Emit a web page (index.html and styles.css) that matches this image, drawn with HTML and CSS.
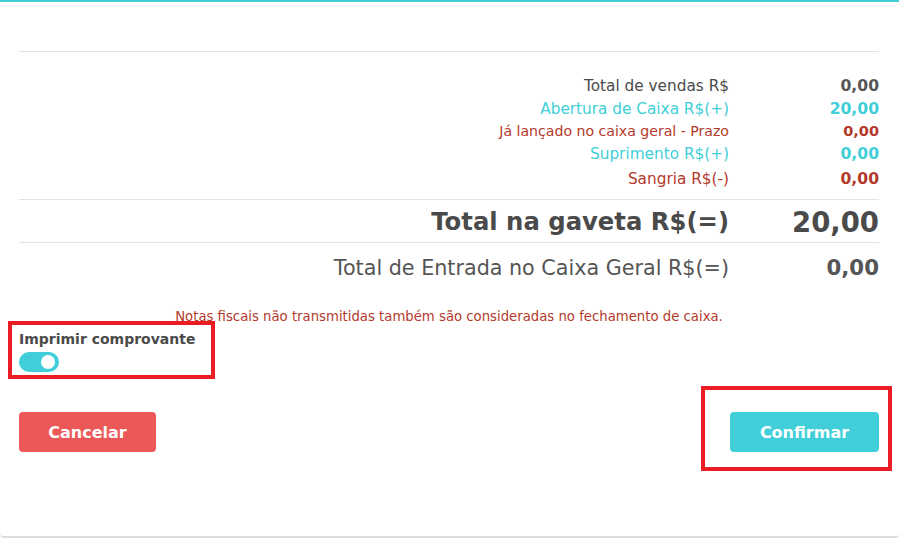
FILE: index.html
```html
<!DOCTYPE html>
<html lang="pt-BR">
<head>
<meta charset="utf-8">
<title>Fechamento de caixa</title>
<link rel="stylesheet" href="styles.css">
</head>
<body>
<div class="modal">
  <div class="head"></div>
  <div class="summary">
    <div class="row r-dark h24"><span class="lbl">Total de vendas R$</span><span class="val">0,00</span></div>
    <div class="row r-cyan h23"><span class="lbl">Abertura de Caixa R$(+)</span><span class="val">20,00</span></div>
    <div class="row r-red small"><span class="lbl">Já lançado no caixa geral - Prazo</span><span class="val">0,00</span></div>
    <div class="row r-cyan h25"><span class="lbl">Suprimento R$(+)</span><span class="val">0,00</span></div>
    <div class="row r-red h24"><span class="lbl">Sangria R$(-)</span><span class="val">0,00</span></div>
  </div>
  <div class="row total"><span class="lbl">Total na gaveta R$(=)</span><span class="val">20,00</span></div>
  <div class="row entrada"><span class="lbl">Total de Entrada no Caixa Geral R$(=)</span><span class="val">0,00</span></div>
  <p class="note">Notas fiscais não transmitidas também são consideradas no fechamento de caixa.</p>
  <div class="print">
    <div class="print-label">Imprimir comprovante</div>
    <div class="toggle"><span class="knob"></span></div>
  </div>
  <div class="actions">
    <button class="btn btn-cancel">Cancelar</button>
    <button class="btn btn-confirm">Confirmar</button>
  </div>
  <div class="mark mark-print"></div>
  <div class="mark mark-confirm"></div>
</div>
</body>
</html>
```

FILE: styles.css
```css
* { box-sizing: border-box; }
html, body { margin: 0; padding: 0; background: #fff; }
body { font-family: "DejaVu Sans", "Open Sans", sans-serif; }

.modal {
  position: relative;
  width: 899px;
  height: 538px;
  border-top: 2px solid #40cfd9;
  border-bottom: 2px solid #dcdcdc;
  border-radius: 0 0 4px 4px;
  padding: 0 20px 0 19px;
  background: #fff;
}

.head {
  height: 50px;
  border-bottom: 1px solid #e2e2e2;
}

.summary {
  padding: 22px 0 8px;
  border-bottom: 1px solid #e2e2e2;
}

.row {
  display: grid;
  grid-template-columns: 1fr 150px;
  text-align: right;
  font-size: 15.3px;
}
.row .val { font-weight: bold; font-size: 15.6px; }
.h23 { line-height: 23px; }
.h24 { line-height: 24px; }
.h25 { line-height: 25px; }
.row.small { font-size: 14.1px; line-height: 21px; }
.row.small .val { font-size: 14.5px; }

.r-dark { color: #4a4a4a; }
.r-dark .val { color: #555; }
.r-cyan { color: #40cfd9; }
.r-red { color: #b3392b; }

.total {
  height: 43px;
  padding-top: 2px;
  line-height: 40px;
  font-size: 24.3px;
  font-weight: bold;
  color: #4a4a4a;
  border-bottom: 1px solid #e2e2e2;
}
.total .val { font-size: 27.5px; }

.entrada {
  padding-top: 13px;
  line-height: 24px;
  font-size: 20.7px;
  color: #555;
}
.entrada .val { font-size: 21.3px; }

.note {
  margin: 29px 0 0;
  text-align: center;
  font-size: 13.25px;
  line-height: 16px;
  color: #b3392b;
}

.print { margin-top: 5px; }
.print-label {
  font-size: 14px;
  line-height: 18px;
  font-weight: bold;
  color: #4a4a4a;
}
.toggle {
  margin-top: 4px;
  width: 40px;
  height: 20px;
  border-radius: 10px;
  background: #40cfd9;
  display: flex;
  align-items: center;
  justify-content: flex-end;
  padding-right: 4px;
}
.knob {
  width: 14px;
  height: 14px;
  border-radius: 50%;
  background: #fff;
}

.actions {
  margin-top: 40px;
  display: flex;
  justify-content: space-between;
}
.btn {
  height: 40px;
  border: none;
  border-radius: 4px;
  color: #fff;
  font-family: inherit;
  font-size: 16px;
  font-weight: bold;
}
.btn-cancel { width: 137px; background: #ec5858; }
.btn-confirm { width: 149px; background: #40cfd9; }

.mark {
  position: absolute;
  border: 4px solid #ea1c24;
}
.mark-print { left: 8px; top: 319px; width: 207px; height: 58px; }
.mark-confirm { left: 701px; top: 384px; width: 191px; height: 85px; }
```
